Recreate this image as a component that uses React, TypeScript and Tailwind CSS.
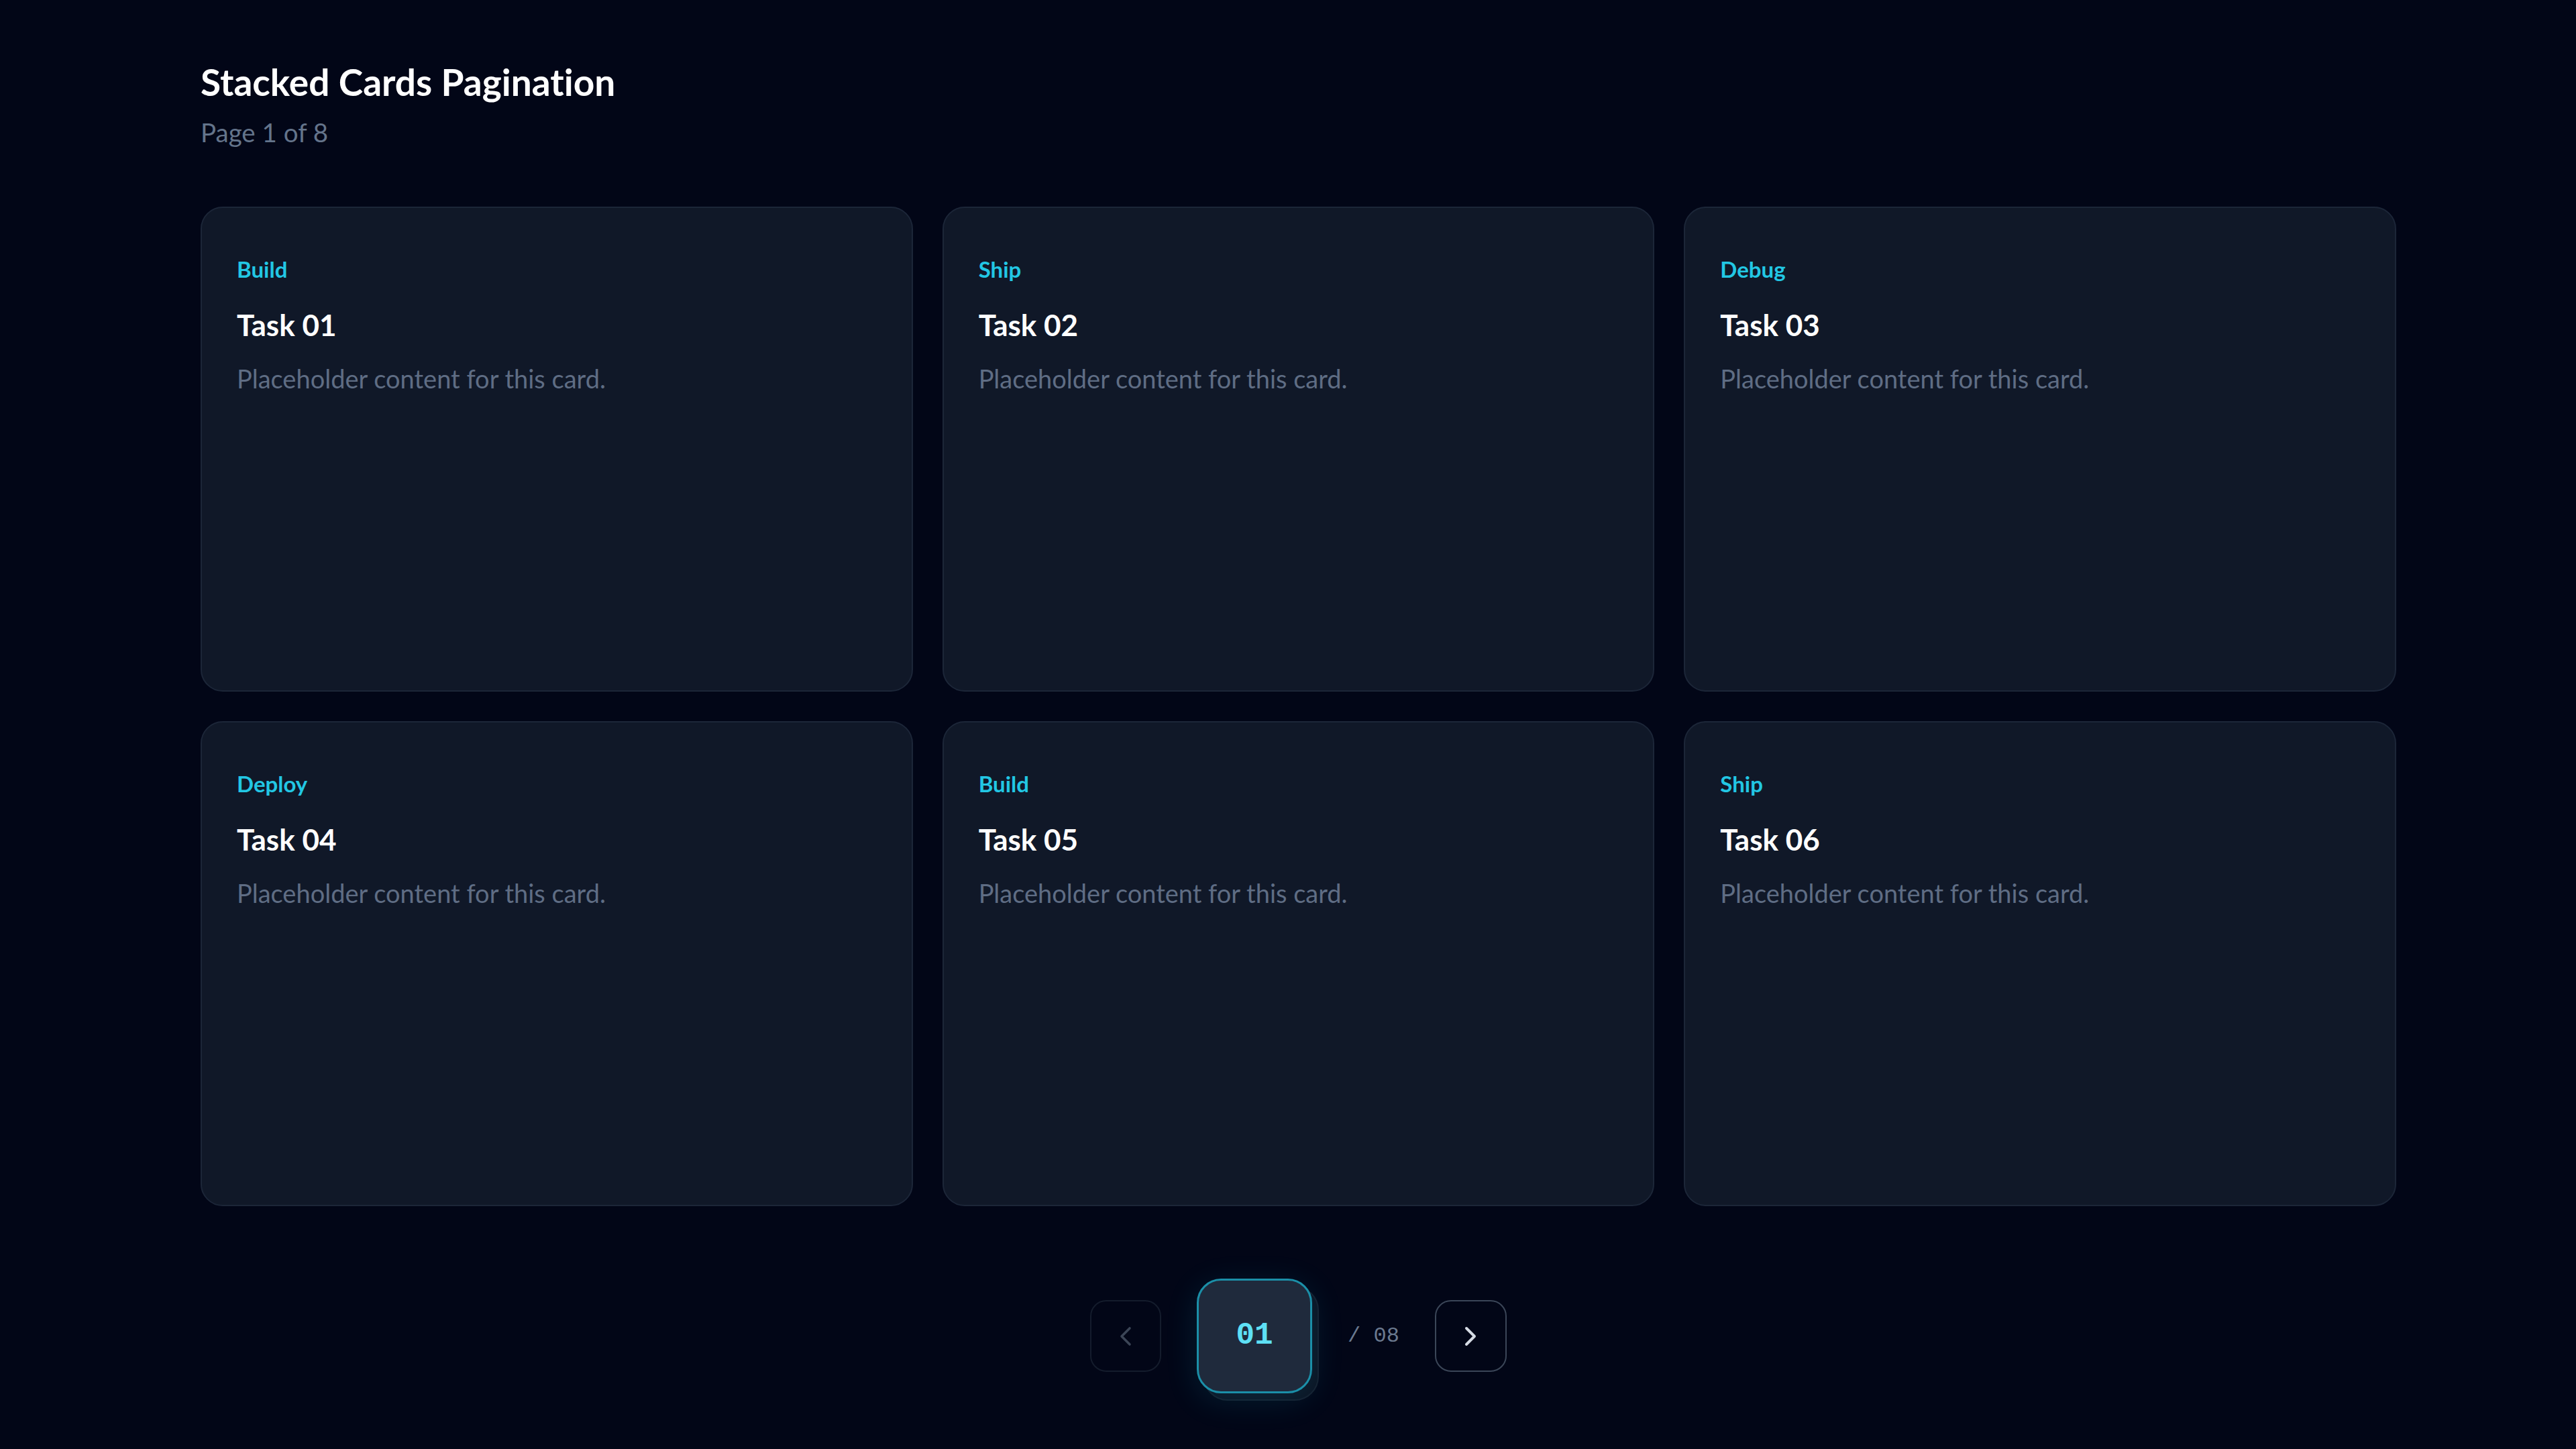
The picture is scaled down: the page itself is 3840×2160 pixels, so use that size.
import React, { useState } from 'react';
import { ChevronLeft, ChevronRight } from 'lucide-react';

const TAGS = ['Build', 'Ship', 'Debug', 'Deploy'];
const PER_PAGE = 6;
const TOTAL_PAGES = 8;

const sans = "font-['Lato','Noto_Sans','Liberation_Sans',sans-serif]";
const mono = "font-['Liberation_Mono','DejaVu_Sans_Mono',monospace]";

interface Task {
  id: number;
  tag: string;
  title: string;
}

const makeTasks = (page: number): Task[] =>
  Array.from({ length: PER_PAGE }, (_, i) => {
    const n = (page - 1) * PER_PAGE + i + 1;
    return {
      id: n,
      tag: TAGS[(n - 1) % TAGS.length],
      title: `Task ${String(n).padStart(2, '0')}`,
    };
  });

const TaskCard: React.FC<{ task: Task }> = ({ task }) => (
  <div className="h-[723px] rounded-[33px] border-2 border-[#1c2638] bg-[#101828] pl-[52px] pt-[69px]">
    <div className="text-[33px] leading-[44px] font-bold text-[#22c7e4]">{task.tag}</div>
    <h3 className="mt-[28px] text-[44px] leading-[66px] font-bold text-white">{task.title}</h3>
    <p className="mt-[20px] text-[38px] leading-[55px] text-[#5f6d84]">
      Placeholder content for this card.
    </p>
  </div>
);

export default function App() {
  const [page, setPage] = useState(1);
  const tasks = makeTasks(page);
  const pad = (n: number) => String(n).padStart(2, '0');

  return (
    <div className={`min-h-screen bg-[#020617] ${sans} [font-variant-ligatures:none]`}>
      <div className="pl-[299px] pr-[268px] pt-[84px] pb-[60px]">
        {/* Header */}
        <h1 className="text-[55px] leading-[77px] font-bold text-white">Stacked Cards Pagination</h1>
        <p className="mt-[9px] text-[38.5px] leading-[55px] text-[#64748b]">
          Page {page} of {TOTAL_PAGES}
        </p>

        {/* Cards */}
        <div className="mt-[83px] grid grid-cols-3 gap-[44px]">
          {tasks.map((t) => (
            <TaskCard key={t.id} task={t} />
          ))}
        </div>

        {/* Pagination */}
        <div className="mt-[108px] flex items-center justify-center gap-[53px]">
          <button
            onClick={() => setPage((p) => Math.max(1, p - 1))}
            disabled={page === 1}
            className="flex h-[107px] w-[106px] items-center justify-center rounded-[24px] border-2 border-[#141c2c] text-[#3b4556]"
          >
            <ChevronLeft size={48} strokeWidth={1.8} />
          </button>

          <div className="relative h-[171px] w-[172px]">
            <div className="absolute left-[10px] top-[11px] h-[171px] w-[172px] rounded-[36px] border-2 border-[#151e2e] bg-[#0b1222]" />
            <div className="absolute inset-0 flex items-center justify-center rounded-[36px] border-[3px] border-[#1b8fa8] bg-[#1f2a3c] shadow-[0_10px_50px_rgba(34,211,238,0.12)]">
              <span className={`${mono} text-[46px] font-semibold text-[#5ee0f5]`}>{pad(page)}</span>
            </div>
          </div>

          <span className={`${mono} text-[32px] text-[#6b7a90]`}>/ {pad(TOTAL_PAGES)}</span>

          <button
            onClick={() => setPage((p) => Math.min(TOTAL_PAGES, p + 1))}
            className="flex h-[107px] w-[107px] items-center justify-center rounded-[24px] border-2 border-[#3b4658] text-[#d5dbe4]"
          >
            <ChevronRight size={48} strokeWidth={2} />
          </button>
        </div>
      </div>
    </div>
  );
}
